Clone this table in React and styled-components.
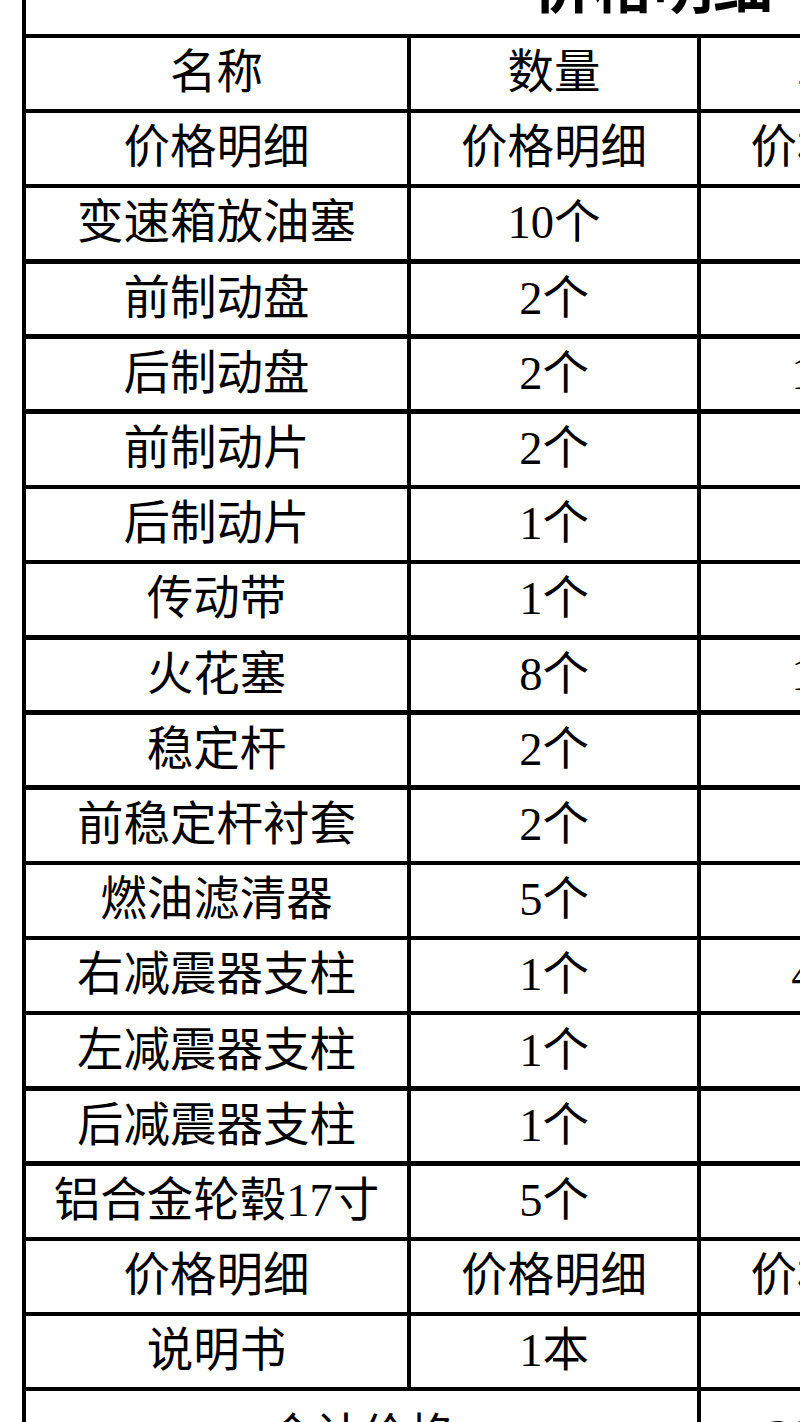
import React from "react";
import styled, { createGlobalStyle } from "styled-components";

const Global = createGlobalStyle`
  html, body {
    margin: 0;
    padding: 0;
    background: #ffffff;
    overflow: hidden;
  }
  body {
    font-family: "Liberation Serif", "Noto Sans CJK SC", serif;
    color: #000;
  }
`;

const Page = styled.div`
  width: 800px;
  height: 1422px;
  overflow: hidden;
  display: flex;
  flex-direction: column;
  align-items: flex-start;
  padding-left: 22px;
  box-sizing: border-box;
  background: #ffffff;
`;

const Sheet = styled.div`
  flex: none;
  margin-top: -60.5px;
  display: grid;
  grid-template-columns: 381px 286px 285px 290px;
  grid-template-rows: 90px repeat(18, 70.7px) 92px;
  gap: 4.5px 4px;
  padding: 4px;
  background: #000;
`;

const TitleCell = styled.div`
  grid-column: 1 / -1;
  background: #fff;
  display: flex;
  align-items: center;
  justify-content: center;
  padding-bottom: 14px;
  box-sizing: border-box;
  font-family: "Noto Sans CJK SC", sans-serif;
  font-weight: 700;
  font-size: 60px;
`;

const Cell = styled.div`
  grid-column: ${(p) => (p.$span ? `span ${p.$span}` : "auto")};
  background: #fff;
  display: flex;
  align-items: center;
  justify-content: center;
  white-space: nowrap;
  font-family: "Liberation Serif", "Noto Sans CJK SC", serif;
  font-size: 46.5px;
  line-height: 1;
`;

const rows = [
  ["名称", "数量", "单价", "总价"],
  ["价格明细", "价格明细", "价格明细", "价格明细"],
  ["变速箱放油塞", "10个", "35.0", "350.0"],
  ["前制动盘", "2个", "60.0", "120.0"],
  ["后制动盘", "2个", "150.0", "300.0"],
  ["前制动片", "2个", "80.0", "160.0"],
  ["后制动片", "1个", "90.0", "90.0"],
  ["传动带", "1个", "50.0", "50.0"],
  ["火花塞", "8个", "120.0", "960.0"],
  ["稳定杆", "2个", "60.0", "120.0"],
  ["前稳定杆衬套", "2个", "30.0", "60.0"],
  ["燃油滤清器", "5个", "40.0", "200.0"],
  ["右减震器支柱", "1个", "450.0", "450.0"],
  ["左减震器支柱", "1个", "75.0", "75.0"],
  ["后减震器支柱", "1个", "85.0", "85.0"],
  ["铝合金轮毂17寸", "5个", "95.0", "475.0"],
  ["价格明细", "价格明细", "价格明细", "价格明细"],
  ["说明书", "1本", "20.0", "20.0"],
];

export default function App() {
  return (
    <>
      <Global />
      <Page>
        <Sheet>
          <TitleCell>价格明细</TitleCell>
          {rows.map((r, i) =>
            r.map((c, j) => <Cell key={`${i}-${j}`}>{c}</Cell>)
          )}
          <Cell $span={2}>合计价格</Cell>
          <Cell>2860.00</Cell>
          <Cell>3515.00</Cell>
        </Sheet>
      </Page>
    </>
  );
}
